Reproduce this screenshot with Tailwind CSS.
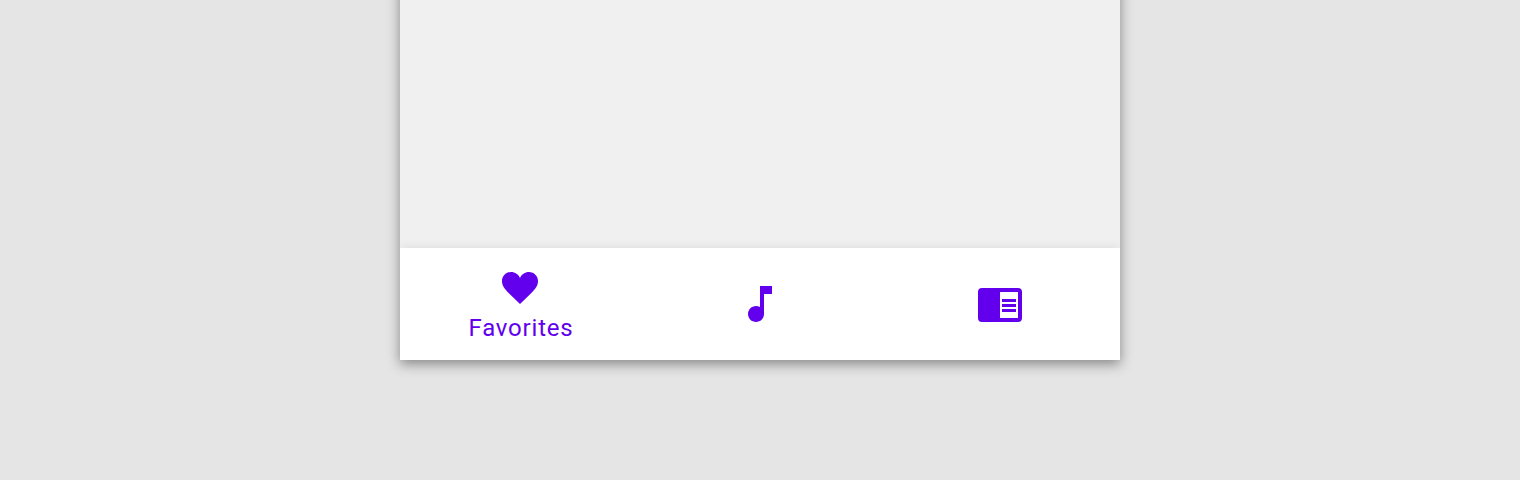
<!DOCTYPE html>
<html lang="en">
<head>
<meta charset="utf-8">
<title>Bottom navigation</title>
<script src="https://cdn.jsdelivr.net/npm/@tailwindcss/browser@4"></script>
</head>
<body class="h-[480px] overflow-hidden bg-[#e5e5e5] font-['Roboto',sans-serif] antialiased">
<main class="mx-auto -mt-10 flex h-[400px] w-[720px] flex-col bg-[#f0f0f0] shadow-[0_4px_12px_rgba(0,0,0,0.42)]">
  <div class="flex-1"></div>
  <nav class="grid h-28 grid-cols-3 bg-white text-[#6200ee] shadow-[0_0_10px_rgba(0,0,0,0.09)] [clip-path:inset(-12px_0_0_0)]">
    <a class="flex flex-col items-center pt-4">
      <svg class="size-12 shrink-0" viewBox="0 0 24 24" fill="currentColor"><path d="M12 20L6.700 14.900C4.200 12.400 3 10.800 3 8.500 3 6 5 4 7.500 4 9.500 4 11.300 5.200 12 7c.7-1.800 2.500-3 4.500-3C19 4 21 6 21 8.500c0 2.300-1.200 3.900-3.700 6.400L12 20z"/></svg>
      <span class="pl-0.5 text-2xl leading-8 tracking-[0.8px]">Favorites</span>
    </a>
    <a class="flex items-center justify-center">
      <svg class="size-12" viewBox="0 0 24 24" fill="currentColor"><path d="M12 3v10.550c-.59-.34-1.270-.55-2-.55-2.210 0-4 1.790-4 4s1.790 4 4 4 4-1.790 4-4V7h4V3h-6z"/></svg>
    </a>
    <a class="flex items-center justify-center">
      <svg class="size-12" viewBox="0 0 24 24" fill="currentColor"><path fill-rule="evenodd" d="M3 4h18a2 2 0 0 1 2 2v13a2 2 0 0 1-2 2H3a2 2 0 0 1-2-2V6a2 2 0 0 1 2-2zM12 6v13h9V6zM13 9.500h7V11h-7zM13 12h7v1.500h-7zM13 14.500h7V16h-7z"/></svg>
    </a>
  </nav>
</main>
</body>
</html>
